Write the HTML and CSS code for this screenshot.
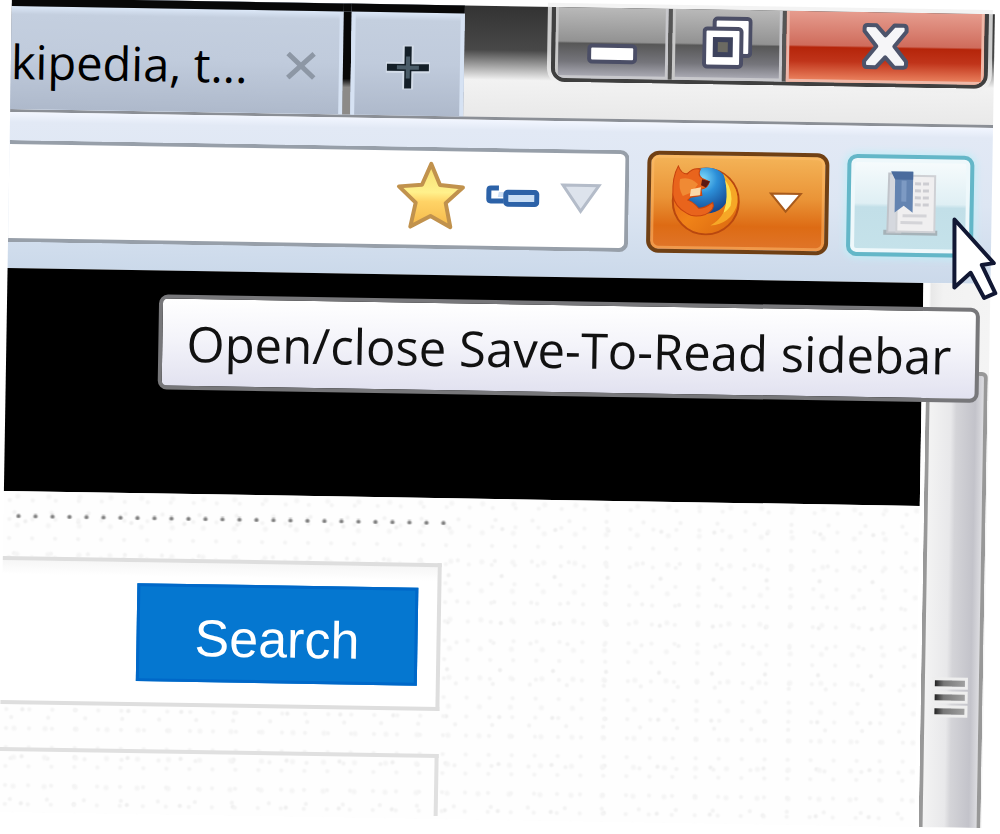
FILE: index.html
```
<!DOCTYPE html>
<html lang="en">
  <head>
    <meta charset="UTF-8" />
    <meta name="viewport" content="width=device-width, initial-scale=1.0" />
    <title>Save-To-Read</title>
    <link rel="stylesheet" href="styles.css">
  </head>
  <body>
    <div class="window">
      <header class="titlebar">
        <div class="tab">
          <span class="tab-title">kipedia, t...</span>
          <button class="tab-close" aria-label="Close tab">
            <svg width="32" height="28" viewBox="0 0 32 28">
              <path d="M3 2 L29 26 M29 2 L3 26" stroke="#8d97a5" stroke-width="5" />
            </svg>
          </button>
        </div>
        <button class="new-tab" aria-label="New tab">
          <svg width="46" height="46" viewBox="0 0 46 46">
            <path d="M23 1 V45 M1 23 H45" stroke="#d3dce8" stroke-width="11" />
            <path d="M23 2 V44 M2 23 H44" stroke="#141f28" stroke-width="7" />
            <path d="M23 12 V34 M12 23 H34" stroke="#4a5c68" stroke-width="4" />
          </svg>
        </button>
        <div class="window-btns">
          <button class="win-btn win-min" aria-label="Minimize">
            <svg width="50" height="54" viewBox="0 0 50 54">
              <rect x="2" y="32" width="46" height="16" rx="3" fill="#fff" stroke="#4b4e66" stroke-width="4" />
            </svg>
          </button>
          <button class="win-btn win-restore" aria-label="Restore">
            <svg width="50" height="54" viewBox="0 0 50 54">
              <rect x="12" y="3" width="36" height="37" rx="3" fill="#fff" stroke="#4b4e66" stroke-width="4" />
              <rect x="2" y="13" width="37" height="38" rx="3" fill="#fff" stroke="#4b4e66" stroke-width="4" />
              <rect x="13" y="24" width="15" height="15" fill="#6b6a62" stroke="#3d425c" stroke-width="5" />
            </svg>
          </button>
          <button class="win-btn win-close" aria-label="Close">
            <svg width="48" height="54" viewBox="0 0 48 54">
              <path d="M3 10 Q3 7 6 7 H15 L24 17 L33 7 H42 Q45 7 45 10 V13 L33 28 L45 43 V46 Q45 49 42 49 H33 L24 39 L15 49 H6 Q3 49 3 46 V43 L15 28 L3 13 Z" fill="#f6f6f8" stroke="#4d546b" stroke-width="4" stroke-linejoin="round" />
            </svg>
          </button>
        </div>
      </header>

      <div class="toolbar">
        <div class="url-bar">
          <input class="url-input" type="text" aria-label="Address" />
          <button class="url-btn" aria-label="Bookmark this page">
            <svg width="70" height="70" viewBox="0 0 70 70">
              <defs>
                <linearGradient id="gold" x1="0" y1="0" x2="0" y2="1">
                  <stop offset="0" stop-color="#f6dc70" />
                  <stop offset=".45" stop-color="#fff18c" />
                  <stop offset=".6" stop-color="#ffd366" />
                  <stop offset="1" stop-color="#f5b94a" />
                </linearGradient>
              </defs>
              <path d="M35 3 L44 24 L67 26 L50 42 L55 66 L35 55 L15 66 L20 42 L3 26 L26 24 Z" fill="url(#gold)" stroke="#c1924d" stroke-width="4" stroke-linejoin="round" />
            </svg>
          </button>
          <button class="url-btn" aria-label="Saved login">
            <svg width="54" height="24" viewBox="0 0 54 24">
              <path d="M13 3 H5 Q3 3 3 5 V14 Q3 16 5 16 H18" fill="none" stroke="#2c62a8" stroke-width="5" />
              <path d="M13 7 H18 V12 H12 Z" fill="#cfe0f5" />
              <rect x="20" y="7" width="31" height="12" rx="2" fill="#c9def5" stroke="#2c62a8" stroke-width="5" />
            </svg>
          </button>
          <button class="url-btn" aria-label="Show history">
            <svg width="42" height="32" viewBox="0 0 42 32">
              <path d="M3 3 H39 L21 29 Z" fill="#dde3ec" stroke="#b4bcc9" stroke-width="3" />
            </svg>
          </button>
        </div>
        <button class="firefox-btn" aria-label="Firefox menu">
          <svg width="70" height="70" viewBox="0 0 70 70">
            <defs>
              <radialGradient id="globe" cx=".4" cy=".25" r=".8">
                <stop offset="0" stop-color="#7fdcfb" />
                <stop offset=".4" stop-color="#2c8fd8" />
                <stop offset="1" stop-color="#123f88" />
              </radialGradient>
              <linearGradient id="fox" x1="0" y1="0" x2="1" y2="1">
                <stop offset="0" stop-color="#e5571b" />
                <stop offset=".5" stop-color="#f08318" />
                <stop offset="1" stop-color="#d9660f" />
              </linearGradient>
            </defs>
            <circle cx="35" cy="36" r="33" fill="url(#fox)" stroke="#b9480f" stroke-width="2" />
            <circle cx="36" cy="25" r="23" fill="url(#globe)" />
            <path d="M52 8 Q70 22 66 40 Q60 58 40 60 Q54 52 56 36 Q57 20 52 8 Z" fill="#f6a726" />
            <path d="M54 14 Q63 26 60 40 Q56 46 53 47 Q58 32 54 14 Z" fill="#fde04e" />
            <path d="M2 30 Q1 12 7 1 Q10 9 16 9 Q22 2 29 4 Q26 10 31 13 L38 16 Q38 22 30 24 L31 30 L20 32 L17 35 Q23 37 28 43 Q34 43 42 37 Q45 44 35 49 Q23 53 16 48 Q4 42 2 30 Z" fill="#e9641c" stroke="#c7430e" stroke-width="1" />
            <path d="M9 14 Q19 11 27 19 L21 27 L12 31 Q7 23 9 14 Z" fill="#f08a34" />
            <path d="M31 14 L39 16 L35 22 L30 20 Z" fill="#5b1812" />
            <path d="M20 24 L30 22 L29 30 L19 31 Z" fill="#fbd9a8" />
          </svg>
          <svg width="34" height="24" viewBox="0 0 34 24">
            <path d="M2 4 H32 L17 22 Z" fill="#fff" stroke="#a85a1b" stroke-width="2" />
          </svg>
        </button>
        <button class="sidebar-btn" aria-label="Open/close Save-To-Read sidebar">
          <svg width="56" height="68" viewBox="0 0 56 68">
            <path d="M1 63 H55" stroke="#a5b2b8" stroke-width="5" />
            <path d="M6 4 H18 V63 H5 Z" fill="#d5d8de" stroke="#c0c4ca" stroke-width="2" />
            <rect x="14" y="6" width="38" height="56" fill="#f0eff0" stroke="#cfd1d5" stroke-width="2" />
            <path d="M32 14 H46 M32 21 H46 M32 28 H46 M32 35 H46" stroke="#cdcdd2" stroke-width="3" stroke-dasharray="6 2" />
            <path d="M20 46 H44 M18 53 H40" stroke="#d4d4d8" stroke-width="3" />
            <path d="M8 2 H30 V43 L21 36 L12 43 V9 Z" fill="#6484b1" />
            <path d="M8 2 H30 V10 H12 Z" fill="#4a6b9d" />
            <path d="M21 11 V32" stroke="#7d9ac3" stroke-width="5" />
          </svg>
        </button>
      </div>

      <div class="viewport">
        <main class="page">
          <div class="banner"></div>
          <div class="content">
            <div class="dots"></div>
            <form class="search-box">
              <button class="search-btn" type="button">Search</button>
            </form>
            <div class="result-box"></div>
          </div>
        </main>
        <div class="scrollbar">
          <div class="thumb">
            <div class="grip"></div>
            <div class="grip"></div>
            <div class="grip"></div>
          </div>
        </div>
      </div>

      <div class="tooltip" role="tooltip">Open/close Save-To-Read sidebar</div>
      <svg class="cursor" width="50" height="90" viewBox="0 0 50 90">
        <path d="M3 3 L43 46 L31 48 L45 76 L34 81 L20 56 L4 71 Z" fill="#fff" stroke="#111733" stroke-width="4" stroke-linejoin="round" />
      </svg>
    </div>
  </body>
</html>
```
FILE: styles.css
```
* {
  margin: 0;
  padding: 0;
  box-sizing: border-box;
}
body {
  height: 100vh;
  overflow: hidden;
  background-color: #ffffff;
  font-family: "Open Sans", "Noto Sans", sans-serif;
}
button {
  border: none;
  background: none;
  font: inherit;
}
svg {
  display: block;
}
/* the whole window leans slightly to the right */
.window {
  position: relative;
  margin: -2px 5px 0 12px;
  transform: rotate(0.94deg);
  transform-origin: top left;
}

/* title bar */
.titlebar {
  display: flex;
  align-items: flex-start;
  height: 114px;
  border-bottom: 3px solid #8b8f96;
  background-image: linear-gradient(to bottom, #333333, #484848 44px, #f2f2f2 74px, #e9e9e9);
}
.tab,
.new-tab {
  display: flex;
  align-items: center;
  height: 111px;
  padding-top: 6px;
  border-top: 8px solid #080808;
  background-color: #bcc7d8;
  background-image: linear-gradient(to bottom, #dce8f8, #c4cfdf 8px, #c0cbdc 50%, #aeb9cb);
}
.tab {
  flex: 0 0 340px;
  justify-content: space-between;
  padding-right: 26px;
  border-right: 8px solid #111111;
  border-image: linear-gradient(to bottom, #080808 70px, #8c8a88 78px) 8;
  border-width: 8px 8px 0 0;
  box-shadow: inset -4px 0 0 #d6e2f3;
}
.tab-title {
  font-size: 47px;
  line-height: 60px;
  white-space: nowrap;
}
.new-tab {
  flex: 0 0 113px;
  justify-content: center;
  box-shadow: inset 4px 0 0 #d6e2f3, inset -4px 0 0 #d6e2f3;
}
.window-btns {
  display: flex;
  margin-left: auto;
  margin-right: 6px;
  border: 4px solid #3f3f3f;
  border-top: none;
  border-radius: 0 0 14px 14px;
  box-shadow: 0 0 0 4px rgba(240, 240, 240, 0.8);
  overflow: hidden;
}
.win-btn {
  display: flex;
  justify-content: center;
  align-items: flex-start;
  height: 71px;
  padding-top: 6px;
  border-right: 4px solid #555555;
  background-image: linear-gradient(to bottom, #b9b9b9, #929292 34px, #575757 36px, #75757b 54px, #b3b3bd);
  box-shadow: inset 3px 0 0 #c8c8c8, inset -3px -3px 0 #c8c8cc;
}
.win-min {
  width: 117px;
}
.win-restore {
  width: 114px;
}
.win-close {
  width: 198px;
  border-right: none;
  background-image: linear-gradient(to bottom, #e69c8e, #cf6c5c 34px, #b5250a 36px, #c0341a 50px, #ef8a66);
  box-shadow: inset 3px 0 0 #eab5a9, inset -3px -3px 0 #eeb8a8;
}

/* navigation toolbar */
.toolbar {
  display: flex;
  align-items: flex-start;
  gap: 18px;
  height: 156px;
  padding: 28px 18px 0 0;
  background-image: linear-gradient(to bottom, #f2f6ff, #e2e9f5 10px, #dde6f3 50%, #cbd9ea);
}
.url-bar {
  display: flex;
  align-items: center;
  flex: 1;
  gap: 20px;
  min-width: 0;
  height: 102px;
  padding-right: 23px;
  padding-bottom: 4px;
  border: 4px solid #979fa9;
  border-left: none;
  border-radius: 0 9px 9px 0;
  background-color: #ffffff;
}
.url-input {
  flex: 1;
  min-width: 0;
  height: 60px;
  border: none;
  outline: none;
  background: none;
  font: inherit;
}
.firefox-btn {
  display: flex;
  align-items: center;
  justify-content: space-between;
  width: 182px;
  height: 102px;
  padding: 0 22px 4px 20px;
  border: 4px solid #704014;
  border-radius: 12px;
  background-image: linear-gradient(to bottom, #f4b458, #ea9437 45%, #dd6b14 75%, #e0752a);
  box-shadow: inset 0 0 0 3px rgba(255, 190, 110, 0.5);
}
.sidebar-btn {
  display: flex;
  align-items: center;
  justify-content: center;
  width: 127px;
  height: 102px;
  padding-bottom: 4px;
  border: 4px solid #63b7c8;
  border-radius: 10px;
  background-image: linear-gradient(to bottom, #f8fcfd, #dfeff4 48%, #c2dfe8 52%, #c5e2ea);
  box-shadow: inset 0 0 0 4px #eef8fb, 0 0 7px 2px #c2edf7;
}

/* page */
.viewport {
  display: flex;
  height: 544px;
}
.page {
  flex: 1;
  min-width: 0;
}
.banner {
  height: 223px;
  background-color: #000000;
}
.content {
  height: 321px;
  padding-top: 22px;
  background-color: #fefefe;
  background-image:
    radial-gradient(circle at 6px 9px, #f4f4f4 1px, transparent 3px),
    radial-gradient(circle at 14px 5px, #f5f5f5 1px, transparent 4px),
    radial-gradient(circle at 11px 21px, #f3f3f3 1px, transparent 3px),
    radial-gradient(circle at 22px 30px, #efefef 1px, transparent 3px);
  background-size: 23px 19px, 31px 29px, 37px 41px, 53px 47px;
}
.dots {
  width: 434px;
  height: 5px;
  margin-left: 12px;
  background-image: radial-gradient(circle at 3px 3px, #7d7d7d 1px, transparent 3px);
  background-size: 17px 5px;
}
.search-box {
  display: flex;
  justify-content: flex-end;
  width: 439px;
  height: 148px;
  margin-top: 38px;
  padding: 21px 19px;
  border: 4px solid #dedede;
  border-left: none;
  background-color: #ffffff;
  background-image: linear-gradient(to bottom, #f6f6f6, #ffffff 14px);
}
.search-btn {
  width: 281px;
  height: 98px;
  padding-top: 10px;
  border: 3px solid #0068c8;
  background-color: #0577d0;
  color: #ffffff;
  font-family: "Liberation Sans", Arial, sans-serif;
  font-size: 52px;
  line-height: 60px;
}
.result-box {
  width: 439px;
  height: 62px;
  margin-top: 43px;
  border: 4px solid #e0e0e0;
  border-left: none;
  border-bottom: none;
}

/* scrollbar */
.scrollbar {
  display: flex;
  flex: 0 0 67px;
  flex-direction: column;
  padding: 88px 1px 0 4px;
  background-image: linear-gradient(to right, #ffffff 6px, #e8e8e8 8px, #f2f2f2 20px, #f4f4f4);
}
.thumb {
  display: flex;
  flex: 1;
  flex-direction: column;
  justify-content: flex-end;
  align-items: center;
  gap: 8px;
  padding: 0 4px 113px 0;
  border: 4px solid #989898;
  border-bottom: none;
  border-radius: 6px 6px 0 0;
  background-image: linear-gradient(to right, #f3f3f3, #e8e8ea 40%, #d4d4d8 50%, #c3c3ca 85%, #dcdce0);
}
.grip {
  width: 30px;
  height: 6px;
  background-image: linear-gradient(to right, #222222, #777777 30%, #a0a0a0);
  box-shadow: 0 0 0 3px #eeeeee;
}

/* things lying over the window */
.tooltip {
  position: absolute;
  top: 294px;
  right: 10px;
  height: 95px;
  padding: 14px 24px;
  border: 4px solid #77777a;
  border-radius: 9px;
  background-image: linear-gradient(to bottom, #ffffff, #f4f4fa 45%, #e2e2f0);
  color: #111111;
  font-size: 49px;
  line-height: 60px;
  white-space: nowrap;
}
.cursor {
  position: absolute;
  top: 203px;
  right: -10px;
}
```
